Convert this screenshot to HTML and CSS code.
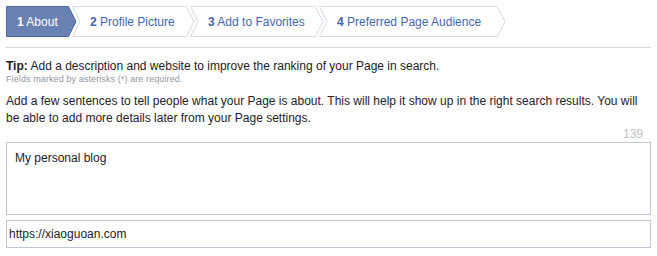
FILE: index.html
```html
<!DOCTYPE html>
<html>
<head>
<meta charset="utf-8">
<link rel="stylesheet" href="styles.css">
</head>
<body>
<div class="page">
  <nav class="steps">
    <div class="step step-active step-1">
      <svg class="step-shape" width="71" height="31" viewBox="0 0 71 31"><polygon points="0.5,0.5 62.5,0.5 70,15.5 62.5,30.5 0.5,30.5" /></svg>
      <span class="step-label"><b>1</b> About</span>
    </div>
    <div class="step step-2">
      <svg class="step-shape" width="123" height="31" viewBox="0 0 123 31"><polygon points="0.5,0.5 114.5,0.5 122,15.5 114.5,30.5 0.5,30.5 8,15.5" /></svg>
      <span class="step-label"><b>2</b> Profile Picture</span>
    </div>
    <div class="step step-3">
      <svg class="step-shape" width="134" height="31" viewBox="0 0 134 31"><polygon points="0.5,0.5 125.5,0.5 133,15.5 125.5,30.5 0.5,30.5 8,15.5" /></svg>
      <span class="step-label"><b>3</b> Add to Favorites</span>
    </div>
    <div class="step step-4">
      <svg class="step-shape" width="187" height="31" viewBox="0 0 187 31"><polygon points="0.5,0.5 178.5,0.5 186,15.5 178.5,30.5 0.5,30.5 8,15.5" /></svg>
      <span class="step-label"><b>4</b> Preferred Page Audience</span>
    </div>
  </nav>
  <hr class="divider">
  <p class="tip"><b>Tip:</b> Add a description and website to improve the ranking of your Page in search.</p>
  <p class="required">Fields marked by asterisks (*) are required.</p>
  <p class="intro">Add a few sentences to tell people what your Page is about. This will help it show up in the right search results. You will be able to add more details later from your Page settings.</p>
  <div class="counter">139</div>
  <div class="textarea">My personal blog</div>
  <div class="input">https://xiaoguoan.com</div>
</div>
</body>
</html>
```
FILE: styles.css
```css
html, body {
  margin: 0;
  padding: 0;
  background: #fff;
}
body {
  font-family: "Liberation Sans", Arial, Helvetica, sans-serif;
  color: #1d2129;
  font-size: 12px;
}
.page {
  padding: 6px 6px 0 6px;
}
.steps {
  display: flex;
  height: 31px;
}
.step {
  position: relative;
  height: 31px;
  display: flex;
  align-items: center;
  flex: none;
}
.step + .step {
  margin-left: -5px;
}
.step-1 { width: 71px; }
.step-2 { width: 123px; }
.step-3 { width: 134px; }
.step-4 { width: 187px; }
.step-shape {
  position: absolute;
  left: 0;
  top: 0;
}
.step-shape polygon {
  fill: #fff;
  stroke: #d6dbe7;
  stroke-width: 1;
}
.step-active .step-shape polygon {
  fill: #6a81b4;
  stroke: #4c66a4;
}
.step-label {
  position: relative;
  font-size: 12px;
  color: #4267b2;
  padding-left: 18px;
  white-space: nowrap;
}
.step-1 .step-label {
  padding-left: 11px;
  color: #fff;
}
.step-label b {
  font-weight: bold;
}
.divider {
  border: 0;
  border-top: 1px solid #d3d6db;
  margin: 10px 0 0 0;
  height: 0;
}
.tip {
  margin: 10px 0 0 0;
  font-size: 12px;
  line-height: 16px;
}
.required {
  margin: 0;
  font-size: 9px;
  line-height: 11px;
  letter-spacing: 0.1px;
  color: #9197a3;
}
.intro {
  margin: 8px 0 0 0;
  font-size: 12px;
  line-height: 17px;
}
.counter {
  text-align: right;
  font-size: 12px;
  color: #bec3c9;
  padding-right: 8px;
  line-height: 14px;
}
.textarea {
  box-sizing: border-box;
  height: 73px;
  border: 1px solid #bdc7d8;
  padding: 7px 8px;
  font-size: 12px;
  line-height: 16px;
  margin-top: 1px;
}
.input {
  box-sizing: border-box;
  height: 28px;
  margin-top: 5px;
  border: 1px solid #bdc7d8;
  padding: 0 2px;
  display: flex;
  align-items: center;
  font-size: 12px;
}
```
